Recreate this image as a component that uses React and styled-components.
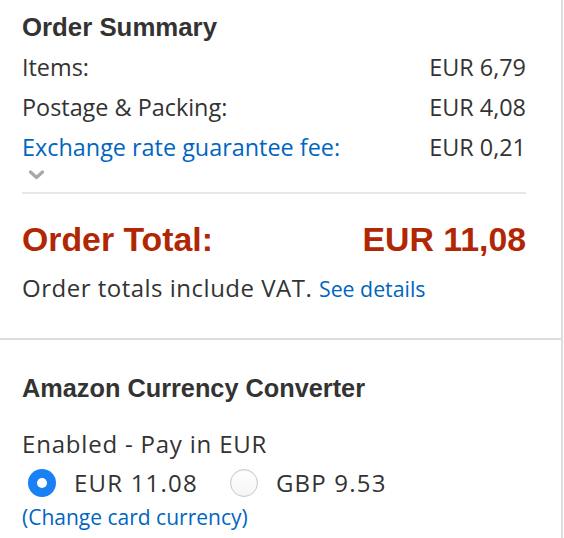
import React, { useState } from "react";
import styled, { createGlobalStyle } from "styled-components";

const GlobalStyle = createGlobalStyle`
  body {
    margin: 0;
    background: #fff;
    font-family: "Open Sans", "Noto Sans", sans-serif;
    color: #333;
  }
`;

const Panel = styled.div`
  width: 561px;
  min-height: 538px;
  border-right: 2px solid #ddd;
  background: #fff;
`;

const Section = styled.section`
  padding: ${(p) => p.$pad};
  border-bottom: ${(p) => (p.$divided ? "2px solid #ddd" : "none")};
`;

const Inner = styled.div`
  width: 504px;
`;

const Heading = styled.h2`
  margin: 0;
  font-family: "Liberation Sans", Arial, sans-serif;
  font-weight: 700;
  font-size: ${(p) => p.$size};
  line-height: 30px;
  color: #333;
`;

const Rows = styled.div`
  margin-top: 5px;
`;

const Row = styled.div`
  display: flex;
  justify-content: space-between;
  font-size: 23.4px;
  line-height: 40px;
`;

const Link = styled.a`
  color: #0066c0;
  text-decoration: none;
  cursor: pointer;
  font-size: ${(p) => p.$size || "inherit"};
  letter-spacing: ${(p) => p.$ls || "normal"};
`;

const Chevron = styled.svg`
  display: block;
  margin: 3px 0 0 7px;
`;

const Rule = styled.hr`
  margin: 12px 0 0;
  border: none;
  height: 2px;
  background: #e7e7e7;
`;

const TotalRow = styled.div`
  display: flex;
  justify-content: space-between;
  margin-top: 25px;
  font-family: "Liberation Sans", Arial, sans-serif;
  font-weight: 700;
  font-size: 33.8px;
  line-height: 40px;
  color: #b12704;
`;

const Note = styled.p`
  margin: 13px 0 0;
  font-size: 24px;
  line-height: 32px;
  letter-spacing: 0.5px;
`;

const Status = styled.p`
  margin: 25px 0 0;
  font-size: 24px;
  line-height: 32px;
  letter-spacing: 0.8px;
`;

const RadioRow = styled.div`
  display: flex;
  align-items: center;
  margin-top: 7px;
  height: 32px;
`;

const Option = styled.label`
  display: flex;
  align-items: center;
  gap: 18px;
  margin-left: 6px;
  margin-right: 26px;
  font-size: 24px;
  line-height: 32px;
  letter-spacing: 1.2px;
  cursor: pointer;
`;

const RadioDot = styled.span`
  box-sizing: border-box;
  width: 28px;
  height: 28px;
  border-radius: 50%;
  display: inline-flex;
  align-items: center;
  justify-content: center;
  background: ${(p) => (p.$on ? "#1a80f6" : "linear-gradient(#fff, #f4f4f4)")};
  border: ${(p) => (p.$on ? "none" : "1px solid #c8c8c8")};
  box-shadow: ${(p) => (p.$on ? "none" : "inset 0 1px 1px rgba(0,0,0,0.06)")};

  &::after {
    content: "";
    width: 10px;
    height: 10px;
    border-radius: 50%;
    background: #fff;
    display: ${(p) => (p.$on ? "block" : "none")};
  }
`;

const ChangeLink = styled.div`
  margin-top: 4px;
  line-height: 28px;
`;

export default function App() {
  const [currency, setCurrency] = useState("EUR");

  return (
    <>
      <GlobalStyle />
      <Panel>
        <Section $pad="12px 0 33px 22px" $divided>
          <Inner>
            <Heading $size="25.8px">Order Summary</Heading>
            <Rows>
              <Row>
                <span>Items:</span>
                <span>EUR 6,79</span>
              </Row>
              <Row>
                <span>Postage &amp; Packing:</span>
                <span>EUR 4,08</span>
              </Row>
              <Row>
                <Link>Exchange rate guarantee fee:</Link>
                <span>EUR 0,21</span>
              </Row>
            </Rows>
            <Chevron width="15" height="10" viewBox="0 0 15 10">
              <path d="M1.5 2 L7.5 7.5 L13.5 2" fill="none" stroke="#a8a8a8" strokeWidth="3.2" strokeLinecap="round" strokeLinejoin="round" />
            </Chevron>
            <Rule />
            <TotalRow>
              <span>Order Total:</span>
              <span>EUR 11,08</span>
            </TotalRow>
            <Note>
              Order totals include VAT.{" "}
              <Link $size="21.3px" $ls="0">
                See details
              </Link>
            </Note>
          </Inner>
        </Section>
        <Section $pad="33px 0 0 22px">
          <Heading $size="25.3px">Amazon Currency Converter</Heading>
          <Status>Enabled - Pay in EUR</Status>
          <RadioRow>
            <Option onClick={() => setCurrency("EUR")}>
              <RadioDot $on={currency === "EUR"} />
              EUR 11.08
            </Option>
            <Option onClick={() => setCurrency("GBP")}>
              <RadioDot $on={currency === "GBP"} />
              GBP 9.53
            </Option>
          </RadioRow>
          <ChangeLink>
            <Link $size="21px">(Change card currency)</Link>
          </ChangeLink>
        </Section>
      </Panel>
    </>
  );
}
